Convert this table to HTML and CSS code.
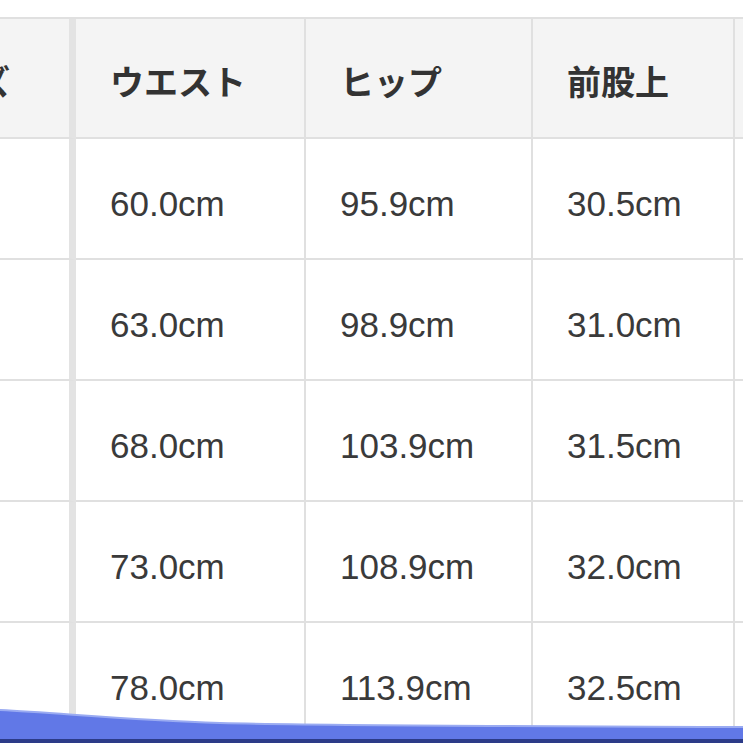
FILE: index.html
```html
<!DOCTYPE html>
<html lang="ja">
<head>
<meta charset="utf-8">
<title>サイズ表</title>
<link rel="stylesheet" href="styles.css">
</head>
<body>
<div class="view">
  <div class="size-table">
    <div class="cell head first">サイズ</div>
    <div class="cell head">ウエスト</div>
    <div class="cell head">ヒップ</div>
    <div class="cell head">前股上</div>
    <div class="cell head">股下</div>

    <div class="cell first">S</div>
    <div class="cell">60.0cm</div>
    <div class="cell">95.9cm</div>
    <div class="cell">30.5cm</div>
    <div class="cell">70.0cm</div>

    <div class="cell first">M</div>
    <div class="cell">63.0cm</div>
    <div class="cell">98.9cm</div>
    <div class="cell">31.0cm</div>
    <div class="cell">71.0cm</div>

    <div class="cell first">L</div>
    <div class="cell">68.0cm</div>
    <div class="cell">103.9cm</div>
    <div class="cell">31.5cm</div>
    <div class="cell">72.0cm</div>

    <div class="cell first">LL</div>
    <div class="cell">73.0cm</div>
    <div class="cell">108.9cm</div>
    <div class="cell">32.0cm</div>
    <div class="cell">73.0cm</div>

    <div class="cell first">3L</div>
    <div class="cell">78.0cm</div>
    <div class="cell">113.9cm</div>
    <div class="cell">32.5cm</div>
    <div class="cell">74.0cm</div>
  </div>
  <svg class="stroke" width="743" height="40" viewBox="0 0 743 40" aria-hidden="true">
    <path d="M0 7 C 60 10, 130 17, 220 20 C 360 23, 560 23, 743 24 L 743 40 L 0 40 Z" fill="#6178e7"/>
    <path d="M0 7 C 60 10, 130 17, 220 20 C 360 23, 560 23, 743 24" fill="none" stroke="#9aabf2" stroke-width="2"/>
    <rect x="0" y="36" width="743" height="4" fill="#2c3b88"/>
  </svg>
</div>
</body>
</html>
```

FILE: styles.css
```css
html, body {
  margin: 0;
  padding: 0;
  background: #ffffff;
}

.view {
  position: relative;
  width: 743px;
  height: 743px;
  overflow: hidden;
  padding-top: 17px;
  box-sizing: border-box;
}

.size-table {
  display: grid;
  grid-template-columns: 201px 230px 227px 202px 300px;
  grid-template-rows: 120px repeat(5, 121px);
  margin-left: -125px;
  width: 1160px;
  border-top: 2px solid #e0e0e0;
  font-family: "Liberation Sans", Arial, "Noto Sans CJK JP", sans-serif;
  font-size: 35px;
  color: #3a3a3a;
}

.cell {
  box-sizing: border-box;
  display: flex;
  align-items: center;
  padding-left: 34px;
  padding-top: 10px;
  border-right: 2px solid #e0e0e0;
  border-bottom: 2px solid #e0e0e0;
  background: #ffffff;
  white-space: nowrap;
}

.head {
  background: #f4f4f4;
  font-family: "Noto Sans CJK JP", sans-serif;
  font-size: 34px;
  font-weight: 700;
  color: #333333;
  padding-top: 4px;
}

.first {
  border-right: 7px solid #e3e3e3;
}

.stroke {
  position: absolute;
  left: 0;
  bottom: 0;
  display: block;
}
```
